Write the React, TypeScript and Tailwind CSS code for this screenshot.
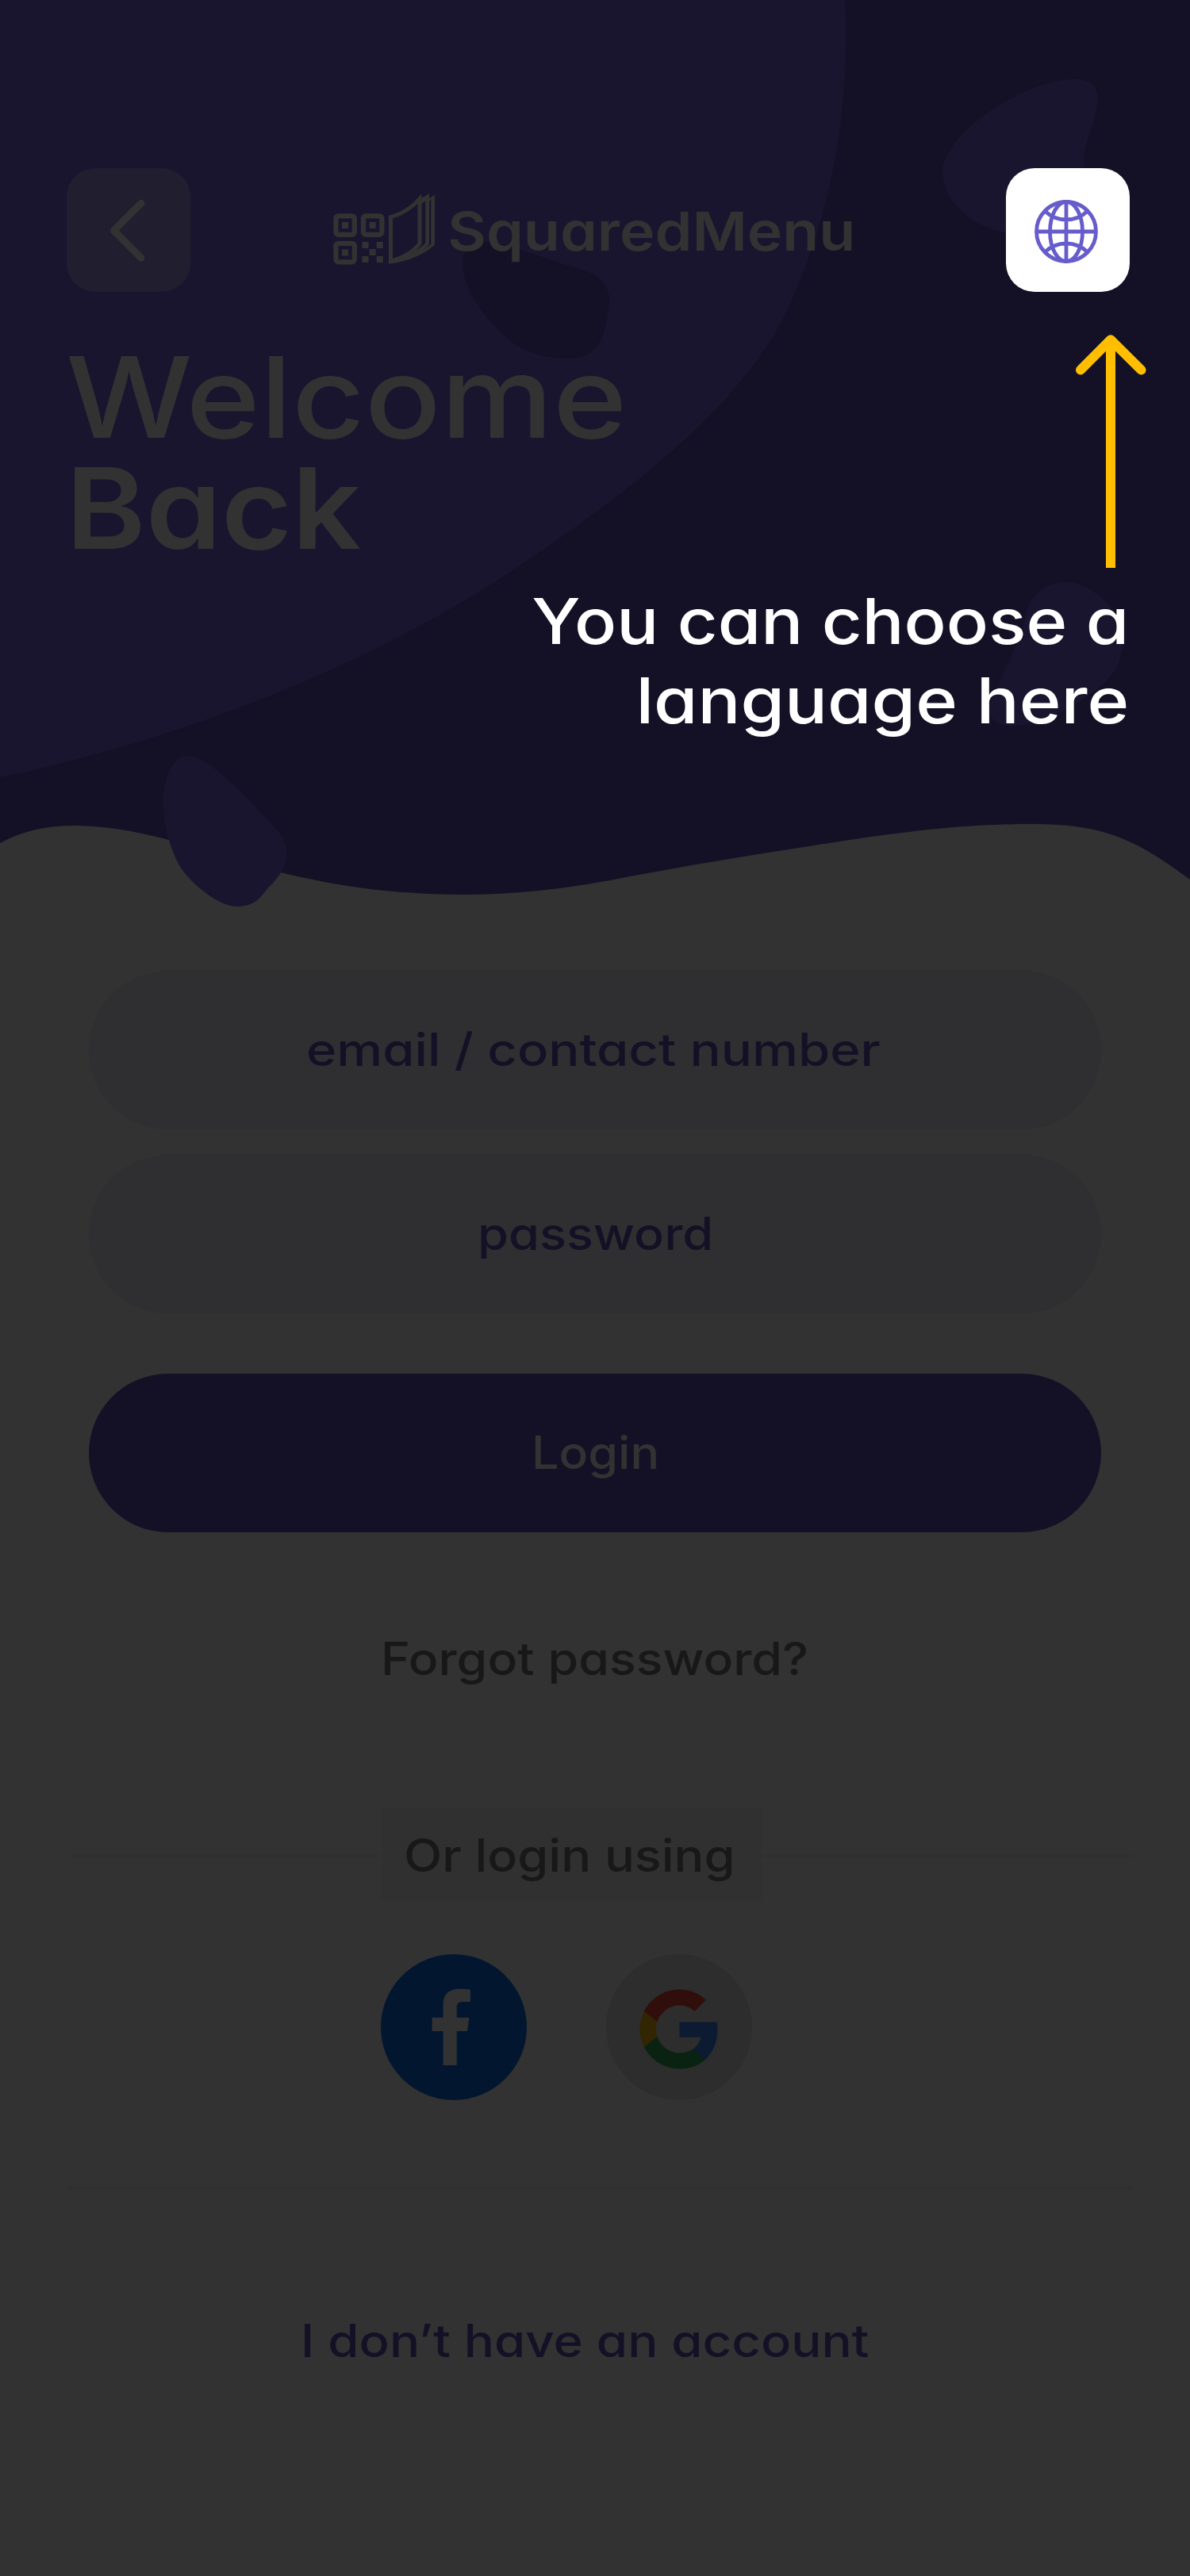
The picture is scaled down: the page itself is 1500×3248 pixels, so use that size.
import type { ReactNode } from "react";

function Backdrop() {
  return (
    <svg className="absolute inset-0" width="1500" height="1160" viewBox="0 0 1500 1160" aria-hidden="true">
      <path
        fill="#141126"
        d="M0 0H1500V1109C1430 1057 1390 1039 1301 1039C1220 1039 1150 1047 1052 1062C960 1076 880 1089 794 1105C730 1118 660 1128 584 1128C505 1128 430 1119 354 1100C270 1078 180 1041 93 1041C60 1041 30 1047 0 1063Z"
      />
      <g fill="#19152f">
        <path d="M0 0H1065C1072 150 1045 280 988 400C925 522 780 630 640 723C470 835 240 930 0 980Z" />
        <path d="M1188 217C1188 170 1290 100 1355 100C1380 100 1386 114 1383 133C1380 155 1366 180 1366 207V290L1268 293C1220 285 1188 250 1188 217Z" />
        <path d="M1344 734C1320 734 1299 748 1293 775C1285 815 1262 850 1249 885C1243 905 1255 915 1276 915C1300 915 1345 897 1364 882C1395 862 1415 845 1415 805C1415 770 1375 734 1344 734Z" />
        <path d="M236 953C218 953 206 980 206 1013C206 1040 215 1075 230 1097C243 1115 275 1143 299 1143C318 1143 327 1134 335 1123C342 1115 349 1109 354 1100C366 1082 362 1062 352 1050C330 1025 309 1003 287 983C270 968 253 953 236 953Z" />
      </g>
      <path
        fill="#141126"
        d="M583 333C583 310 596 305 615 305C640 307 690 327 720 336C755 344 768 358 768 380C768 395 763 415 758 427C750 445 738 452 717 452C690 452 668 446 652 436C615 410 583 365 583 333Z"
      />
    </svg>
  );
}

function Logo() {
  return (
    <svg className="shrink-0" width="132" height="92" viewBox="418 243 132 92" fill="none" stroke="#323232" aria-hidden="true">
      <g strokeWidth="6.3">
        <rect x="423.4" y="272.4" width="23.4" height="23.4" rx="3.2" />
        <rect x="458" y="272.4" width="23.4" height="23.4" rx="3.2" />
        <rect x="423.4" y="306.9" width="23.4" height="23.4" rx="3.2" />
      </g>
      <g fill="#323232" stroke="none">
        <rect x="431" y="280" width="8" height="8" />
        <rect x="465.7" y="280" width="8" height="8" />
        <rect x="431" y="314.5" width="8" height="8" />
        <rect x="456.5" y="305" width="8" height="8" />
        <rect x="474.7" y="305" width="8" height="8" />
        <rect x="465.7" y="314" width="8" height="8" />
        <rect x="456.5" y="323" width="8" height="8" />
        <rect x="474.7" y="323" width="8" height="8" />
        <path
          fillRule="evenodd"
          d="M490 271.7C508 267.500 521 257 531.300 244.300V250L541 244V250.500L548 245.500V308.500C535 321 513 330 490 332.800ZM495 275V326C510 321 519 315 526.500 306.500V256.500C517 266 507 272 495 275ZM531.500 257V308C529 311 527 313.500 524 316C529 313 533 310 536.300 306.500V253.300ZM541 253.500V308C538.500 311 536 313 533 315.500L543.300 308V251.500Z"
        />
      </g>
    </svg>
  );
}

function Globe() {
  return (
    <svg width="80" height="80" viewBox="0 0 80 80" fill="none" stroke="#665ccb" strokeWidth="4.8" aria-hidden="true">
      <circle cx="40" cy="40" r="37.500" />
      <ellipse cx="40" cy="40" rx="20.500" ry="37.500" />
      <path d="M40 2V78M2 40H78M13.500 14.500A38.700 38.700 0 0 0 66.500 14.500M13.500 65.500A38.700 38.700 0 0 1 66.500 65.500" />
    </svg>
  );
}

function GoogleMark() {
  return (
    <svg className="mt-[4px]" width="109" height="109" viewBox="0 0 24 24" aria-hidden="true">
      <path fill="#0d1b32" d="M22.56 12.25c0-.78-.07-1.530-.2-2.250H12v4.260h5.920c-.26 1.370-1.040 2.530-2.210 3.310v2.770h3.570c2.080-1.920 3.280-4.740 3.280-8.090z" />
      <path fill="#0a2212" d="M12 23c2.970 0 5.460-.98 7.280-2.660l-3.570-2.770c-.98.66-2.230 1.060-3.710 1.060-2.860 0-5.290-1.930-6.160-4.530H2.180v2.840C3.990 20.530 7.700 23 12 23z" />
      <path fill="#322501" d="M5.840 14.090c-.22-.66-.35-1.360-.35-2.090s.13-1.430.35-2.090V7.070H2.180C1.430 8.550 1 10.220 1 12s.43 3.450 1.180 4.930l3.660-2.840z" />
      <path fill="#2f0e0b" d="M12 5.380c1.620 0 3.060.56 4.210 1.640l3.150-3.150C17.450 2.090 14.970 1 12 1 7.700 1 3.990 3.470 2.180 7.070l3.660 2.840c.87-2.600 3.300-4.530 6.160-4.530z" />
    </svg>
  );
}

function Pill({ className, children }: { className: string; children: ReactNode }) {
  return <div className={`flex h-[200px] w-[1276px] items-center rounded-full ${className}`}>{children}</div>;
}

const label = "block w-fit origin-left whitespace-nowrap text-[57px] leading-[60px] font-medium";

export default function App() {
  return (
    <div className="relative h-[3248px] w-[1500px] overflow-hidden bg-[#323232] font-['Inter',sans-serif] [font-feature-settings:'cv11']">
      <Backdrop />

      <div className="relative flex flex-col pt-[212px]">
        <header className="flex h-[156px] pl-[84px]">
          <button className="flex size-[156px] items-center justify-center rounded-[36px] bg-[#201e2f] pt-[2px]" aria-label="Back">
            <svg width="60" height="90" viewBox="0 0 60 90" fill="none" aria-hidden="true">
              <path d="M46 10.200L11.500 44.700L46 79.300" stroke="#323232" strokeWidth="9" strokeLinecap="round" strokeLinejoin="round" />
            </svg>
          </button>
          <div className="ml-[178px] flex w-[850px] pt-[31px]">
            <Logo />
            <span className="mt-[14px] ml-[14px] block w-fit origin-left scale-x-[1.106] text-[68px] leading-[68px] font-semibold text-[#323232]">
              SquaredMenu
            </span>
          </div>
          <button className="flex size-[156px] items-center justify-center rounded-[36px] bg-white pt-[4px] pr-[4px]" aria-label="Choose language">
            <Globe />
          </button>
        </header>

        <h1 className="mt-[62px] pl-[83px] text-[142px] leading-[140px] text-[#323232]">
          <span className="block w-fit origin-left scale-x-[1.12] font-medium">Welcome</span>
          <span className="block w-fit origin-left scale-x-[1.076] font-semibold">Back</span>
        </h1>

        <form className="mt-[514px] flex flex-col items-center">
          <Pill className="bg-[#2f2f31] pl-[274px]">
            <span className={`${label} scale-x-[1.144] text-[#141126]`}>email / contact number</span>
          </Pill>
          <Pill className="mt-8 bg-[#2f2f31] pl-[490px]">
            <span className={`${label} scale-x-[1.106] text-[#141126]`}>password</span>
          </Pill>
          <Pill className="mt-[76px] bg-[#141126] pl-[558px]">
            <span className={`${label} scale-x-[1.07] text-[#323232]`}>Login</span>
          </Pill>
        </form>

        <a className={`${label} mt-[130px] ml-[480px] scale-x-[1.1] text-[#181818]`}>Forgot password?</a>

        <div className="mt-[158px] flex items-center pl-[86px]">
          <div className="mt-[4px] h-[4px] w-[394px] bg-[#303030]" />
          <div className="flex h-[116px] w-[480px] items-center bg-[#303030] pt-[3px] pl-[29px]">
            <span className={`${label} scale-x-[1.105] text-[#181818]`}>Or login using</span>
          </div>
          <div className="mt-[4px] h-[4px] w-[468px] bg-[#303030]" />
        </div>

        <div className="mt-[68px] flex gap-[100px] pl-[480px]">
          <button className="size-[184px] rounded-full bg-[#02172f]" aria-label="Facebook">
            <svg width="184" height="184" viewBox="0 0 184 184" fill="#323232" aria-hidden="true">
              <path d="M78.600 140V97H64.600V80H78.600V63C78.600 50 87 43.700 98.600 43.700C104 43.700 108.500 44 112.900 44.500V60H103C97.500 60 95.700 63 95.700 67V80H111.400L109 97H95.700V140Z" />
            </svg>
          </button>
          <button className="flex size-[184px] items-center justify-center rounded-full bg-[#2d2d2d]" aria-label="Google">
            <GoogleMark />
          </button>
        </div>

        <div className="mt-[109px] ml-[86px] h-[4px] w-[1342px] bg-[#303030]" />
        <a className={`${label} mt-[161px] ml-[379px] scale-x-[1.115] text-[#141126]`}>I don’t have an account</a>
      </div>

      {/* Coach mark pointing at the language button */}
      <div className="absolute top-[418px] right-0 flex flex-col items-end">
        <svg className="mr-[50px]" width="100" height="298" viewBox="1350 418 100 298" fill="none" stroke="#ffbe00" strokeWidth="12" aria-hidden="true">
          <path d="M1400 716V430" />
          <path d="M1362 466.500L1400 428.300L1438.500 466.500" strokeLinecap="round" strokeLinejoin="round" />
        </svg>
        <p className="mt-[17px] mr-[77px] flex flex-col items-end text-[80px] leading-[100px] font-medium whitespace-nowrap text-white">
          <span className="block origin-right scale-x-[1.102]">You can choose a</span>
          <span className="block origin-right scale-x-[1.122]">language here</span>
        </p>
      </div>
    </div>
  );
}
